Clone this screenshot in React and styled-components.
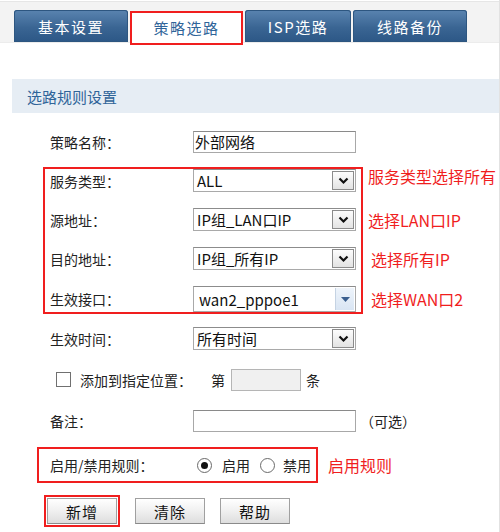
import React from 'react';
import styled, { createGlobalStyle, css } from 'styled-components';

const red = '#f01e1e';
const blue = '#2f6499';
const font = `"Noto Sans CJK SC", "Noto Sans", sans-serif`;

const GlobalStyle = createGlobalStyle`
  html, body {
    margin: 0;
    padding: 0;
    background: #fff;
  }
  body {
    font-family: ${font};
    font-size: 14px;
    color: #222;
  }
`;

export default function App() {
  return (
    <Page>
      <GlobalStyle />
      <TabBar>
        <Tab>基本设置</Tab>
        <Tab active>策略选路</Tab>
        <Tab narrow>ISP选路</Tab>
        <Tab>线路备份</Tab>
      </TabBar>
      <Section>
        <SectionTitle>选路规则设置</SectionTitle>
        <Form>
          <Row indent={38} top={17}>
            <Label>策略名称：</Label>
            <TextInput>外部网络</TextInput>
          </Row>

          <Group top={14}>
            <RedBox>
              <BoxRows>
                <Row indent={5}>
                  <Label>服务类型：</Label>
                  <Select value="ALL" />
                </Row>
                <Row indent={5}>
                  <Label>源地址：</Label>
                  <Select value="IP组_LAN口IP" />
                </Row>
                <Row indent={5}>
                  <Label>目的地址：</Label>
                  <Select value="IP组_所有IP" />
                </Row>
                <Row indent={5} tall>
                  <Label>生效接口：</Label>
                  <Select value="wan2_pppoe1" modern />
                </Row>
              </BoxRows>
            </RedBox>
            <Notes>
              <Note shift={-5}>服务类型选择所有</Note>
              <Note>选择LAN口IP</Note>
              <Note shift={2}>选择所有IP</Note>
              <Note tall shift={2}>选择WAN口2</Note>
            </Notes>
          </Group>

          <Row indent={38} top={13}>
            <Label>生效时间：</Label>
            <Select value="所有时间" />
          </Row>

          <Row indent={44} top={18}>
            <CheckBox />
            <PlainText gap={9}>添加到指定位置：</PlainText>
            <PlainText gap={19}>第</PlainText>
            <SmallInput />
            <PlainText gap={5}>条</PlainText>
          </Row>

          <Row indent={38} top={18}>
            <Label>备注：</Label>
            <TextInput />
            <PlainText gap={4}>（可选）</PlainText>
          </Row>

          <Group top={15}>
            <RedBox narrow>
              <Row indent={11} short>
                <Label>启用/禁用规则：</Label>
                <Radio checked gap={4} />
                <PlainText gap={10}>启用</PlainText>
                <Radio gap={10} />
                <PlainText gap={8}>禁用</PlainText>
              </Row>
            </RedBox>
            <Note inline>启用规则</Note>
          </Group>

          <Buttons>
            <Highlight>
              <Button>新增</Button>
            </Highlight>
            <Button>清除</Button>
            <Button>帮助</Button>
          </Buttons>
        </Form>
      </Section>
    </Page>
  );
}

function Chevron() {
  return (
    <svg width="11" height="8" viewBox="0 0 11 8">
      <path d="M1.5 1.5 L5.5 5.5 L9.5 1.5" fill="none" stroke="#111" strokeWidth="2.2" />
    </svg>
  );
}

function Select({ value, modern }) {
  return (
    <SelectBox modern={modern}>
      <SelectValue modern={modern}>{value}</SelectValue>
      {modern ? (
        <ModernArrow>
          <svg width="9" height="5" viewBox="0 0 9 5">
            <path d="M0 0 H9 L4.5 5 Z" fill="#3b5f8f" />
          </svg>
        </ModernArrow>
      ) : (
        <ArrowButton>
          <Chevron />
        </ArrowButton>
      )}
    </SelectBox>
  );
}

const Page = styled.div`
  width: 500px;
  height: 532px;
  overflow: hidden;
  box-sizing: border-box;
  border-right: 1px solid #e2e2e2;
`;

const TabBar = styled.div`
  display: flex;
  align-items: flex-end;
  gap: 2px;
  height: 40px;
  margin-top: 1px;
  padding-left: 14px;
  background: #f3f3f3;
  border-top: 1px solid #e6e6e6;
  border-bottom: 1px solid #ececec;
`;

const Tab = styled.div`
  box-sizing: border-box;
  width: ${p => (p.narrow ? 106 : p.active ? 113 : 114)}px;
  height: 32px;
  display: flex;
  align-items: center;
  justify-content: center;
  font-size: 15px;
  letter-spacing: 1.5px;
  border-radius: 3px 3px 0 0;
  color: #fff;
  background: linear-gradient(#5a84b0, #3a6593 55%, #2c5786);
  box-shadow: inset 0 0 0 1px #2d5680;
  ${p =>
    p.active &&
    css`
      height: 34px;
      margin-bottom: -3px;
      border-radius: 0;
      color: ${blue};
      background: #fff;
      box-shadow: none;
      border: 2px solid ${red};
      padding-bottom: 2px;
    `}
`;

const Section = styled.div`
  margin: 36px 0 0 12px;
`;

const SectionTitle = styled.div`
  height: 34px;
  display: flex;
  align-items: center;
  padding-left: 15px;
  background: #e6edf4;
  color: ${blue};
  font-size: 15px;
`;

const Form = styled.div`
  display: flex;
  flex-direction: column;
  align-items: flex-start;
  height: 419px;
  border-bottom: 1px solid #e3e3e3;
`;

const Row = styled.div`
  display: flex;
  align-items: center;
  height: ${p => (p.tall ? 26 : p.short ? 32 : 23)}px;
  padding-left: ${p => p.indent || 0}px;
  margin-top: ${p => p.top || 0}px;
`;

const Label = styled.div`
  width: 143px;
  flex-shrink: 0;
  font-size: 14px;
  color: #222;
`;

const TextInput = styled.div`
  box-sizing: border-box;
  width: 163px;
  height: 22px;
  border: 1px solid #a8a8a8;
  border-top-color: #8a8a8a;
  font-size: 15px;
  line-height: 20px;
  padding-left: 1px;
  color: #111;
`;

const SmallInput = styled.div`
  box-sizing: border-box;
  width: 70px;
  height: 22px;
  margin-left: 6px;
  border: 1px solid #b5b5b5;
  background: #f0f0f0;
`;

const PlainText = styled.span`
  margin-left: ${p => p.gap || 0}px;
  font-size: 14px;
  color: #222;
  white-space: nowrap;
`;

const CheckBox = styled.span`
  box-sizing: border-box;
  width: 15px;
  height: 15px;
  border: 1px solid #707070;
  background: #fff;
`;

const Radio = styled.span`
  box-sizing: border-box;
  width: 15px;
  height: 15px;
  margin-left: ${p => p.gap || 0}px;
  border: 1px solid #6a6a6a;
  border-radius: 50%;
  display: flex;
  align-items: center;
  justify-content: center;
  &::after {
    content: '';
    width: 7px;
    height: 7px;
    border-radius: 50%;
    background: ${p => (p.checked ? '#111' : 'transparent')};
  }
`;

const Group = styled.div`
  display: flex;
  align-items: flex-start;
  margin-top: ${p => p.top || 0}px;
`;

const RedBox = styled.div`
  margin-left: ${p => (p.narrow ? 25 : 31)}px;
  border: 2px solid ${red};
  ${Row} {
    padding-right: 5px;
  }
`;

const BoxRows = styled.div`
  display: flex;
  flex-direction: column;
  gap: 16px;
`;

const Notes = styled.div`
  display: flex;
  flex-direction: column;
  gap: 16px;
  padding: 2px 0 0 5px;
`;

const Note = styled.div`
  height: ${p => (p.tall ? 26 : p.inline ? 36 : 23)}px;
  display: flex;
  align-items: center;
  margin-left: ${p => (p.inline ? 10 : p.shift > 0 ? 3 : 0)}px;
  position: relative;
  top: ${p => (p.shift < 0 ? p.shift : 0)}px;
  color: ${red};
  font-size: 16px;
  white-space: nowrap;
`;

const SelectBox = styled.div`
  box-sizing: border-box;
  width: 163px;
  height: ${p => (p.modern ? 26 : 23)}px;
  display: flex;
  align-items: center;
  border: 1px solid #a9a9a9;
  border-top-color: #8c8c8c;
  background: #fff;
  padding: 1px;
`;

const SelectValue = styled.div`
  flex: 1;
  font-size: 15px;
  padding-left: ${p => (p.modern ? 4 : 2)}px;
  color: #111;
  white-space: nowrap;
  overflow: hidden;
`;

const ArrowButton = styled.div`
  box-sizing: border-box;
  width: 22px;
  height: 19px;
  display: flex;
  align-items: center;
  justify-content: center;
  border: 1px solid #8b8b8b;
  background: linear-gradient(#fdfdfd, #e3e3e3);
`;

const ModernArrow = styled.div`
  box-sizing: border-box;
  width: 19px;
  height: 22px;
  display: flex;
  align-items: center;
  justify-content: center;
  border-left: 1px solid #c5d3e3;
  background: linear-gradient(#eef4fb, #d9e5f3);
`;

const Buttons = styled.div`
  display: flex;
  align-items: center;
  gap: 15px;
  margin: 12px 0 0 32px;
`;

const Highlight = styled.div`
  padding: 1px;
  border: 2px solid ${red};
  display: flex;
`;

const Button = styled.div`
  box-sizing: border-box;
  width: 70px;
  height: 26px;
  display: flex;
  align-items: center;
  justify-content: center;
  font-size: 15px;
  letter-spacing: 1px;
  color: #111;
  border: 1px solid #a0a0a0;
  border-bottom-color: #8a8a8a;
  background: linear-gradient(#ffffff, #f0f0f0 50%, #dedede);
`;
